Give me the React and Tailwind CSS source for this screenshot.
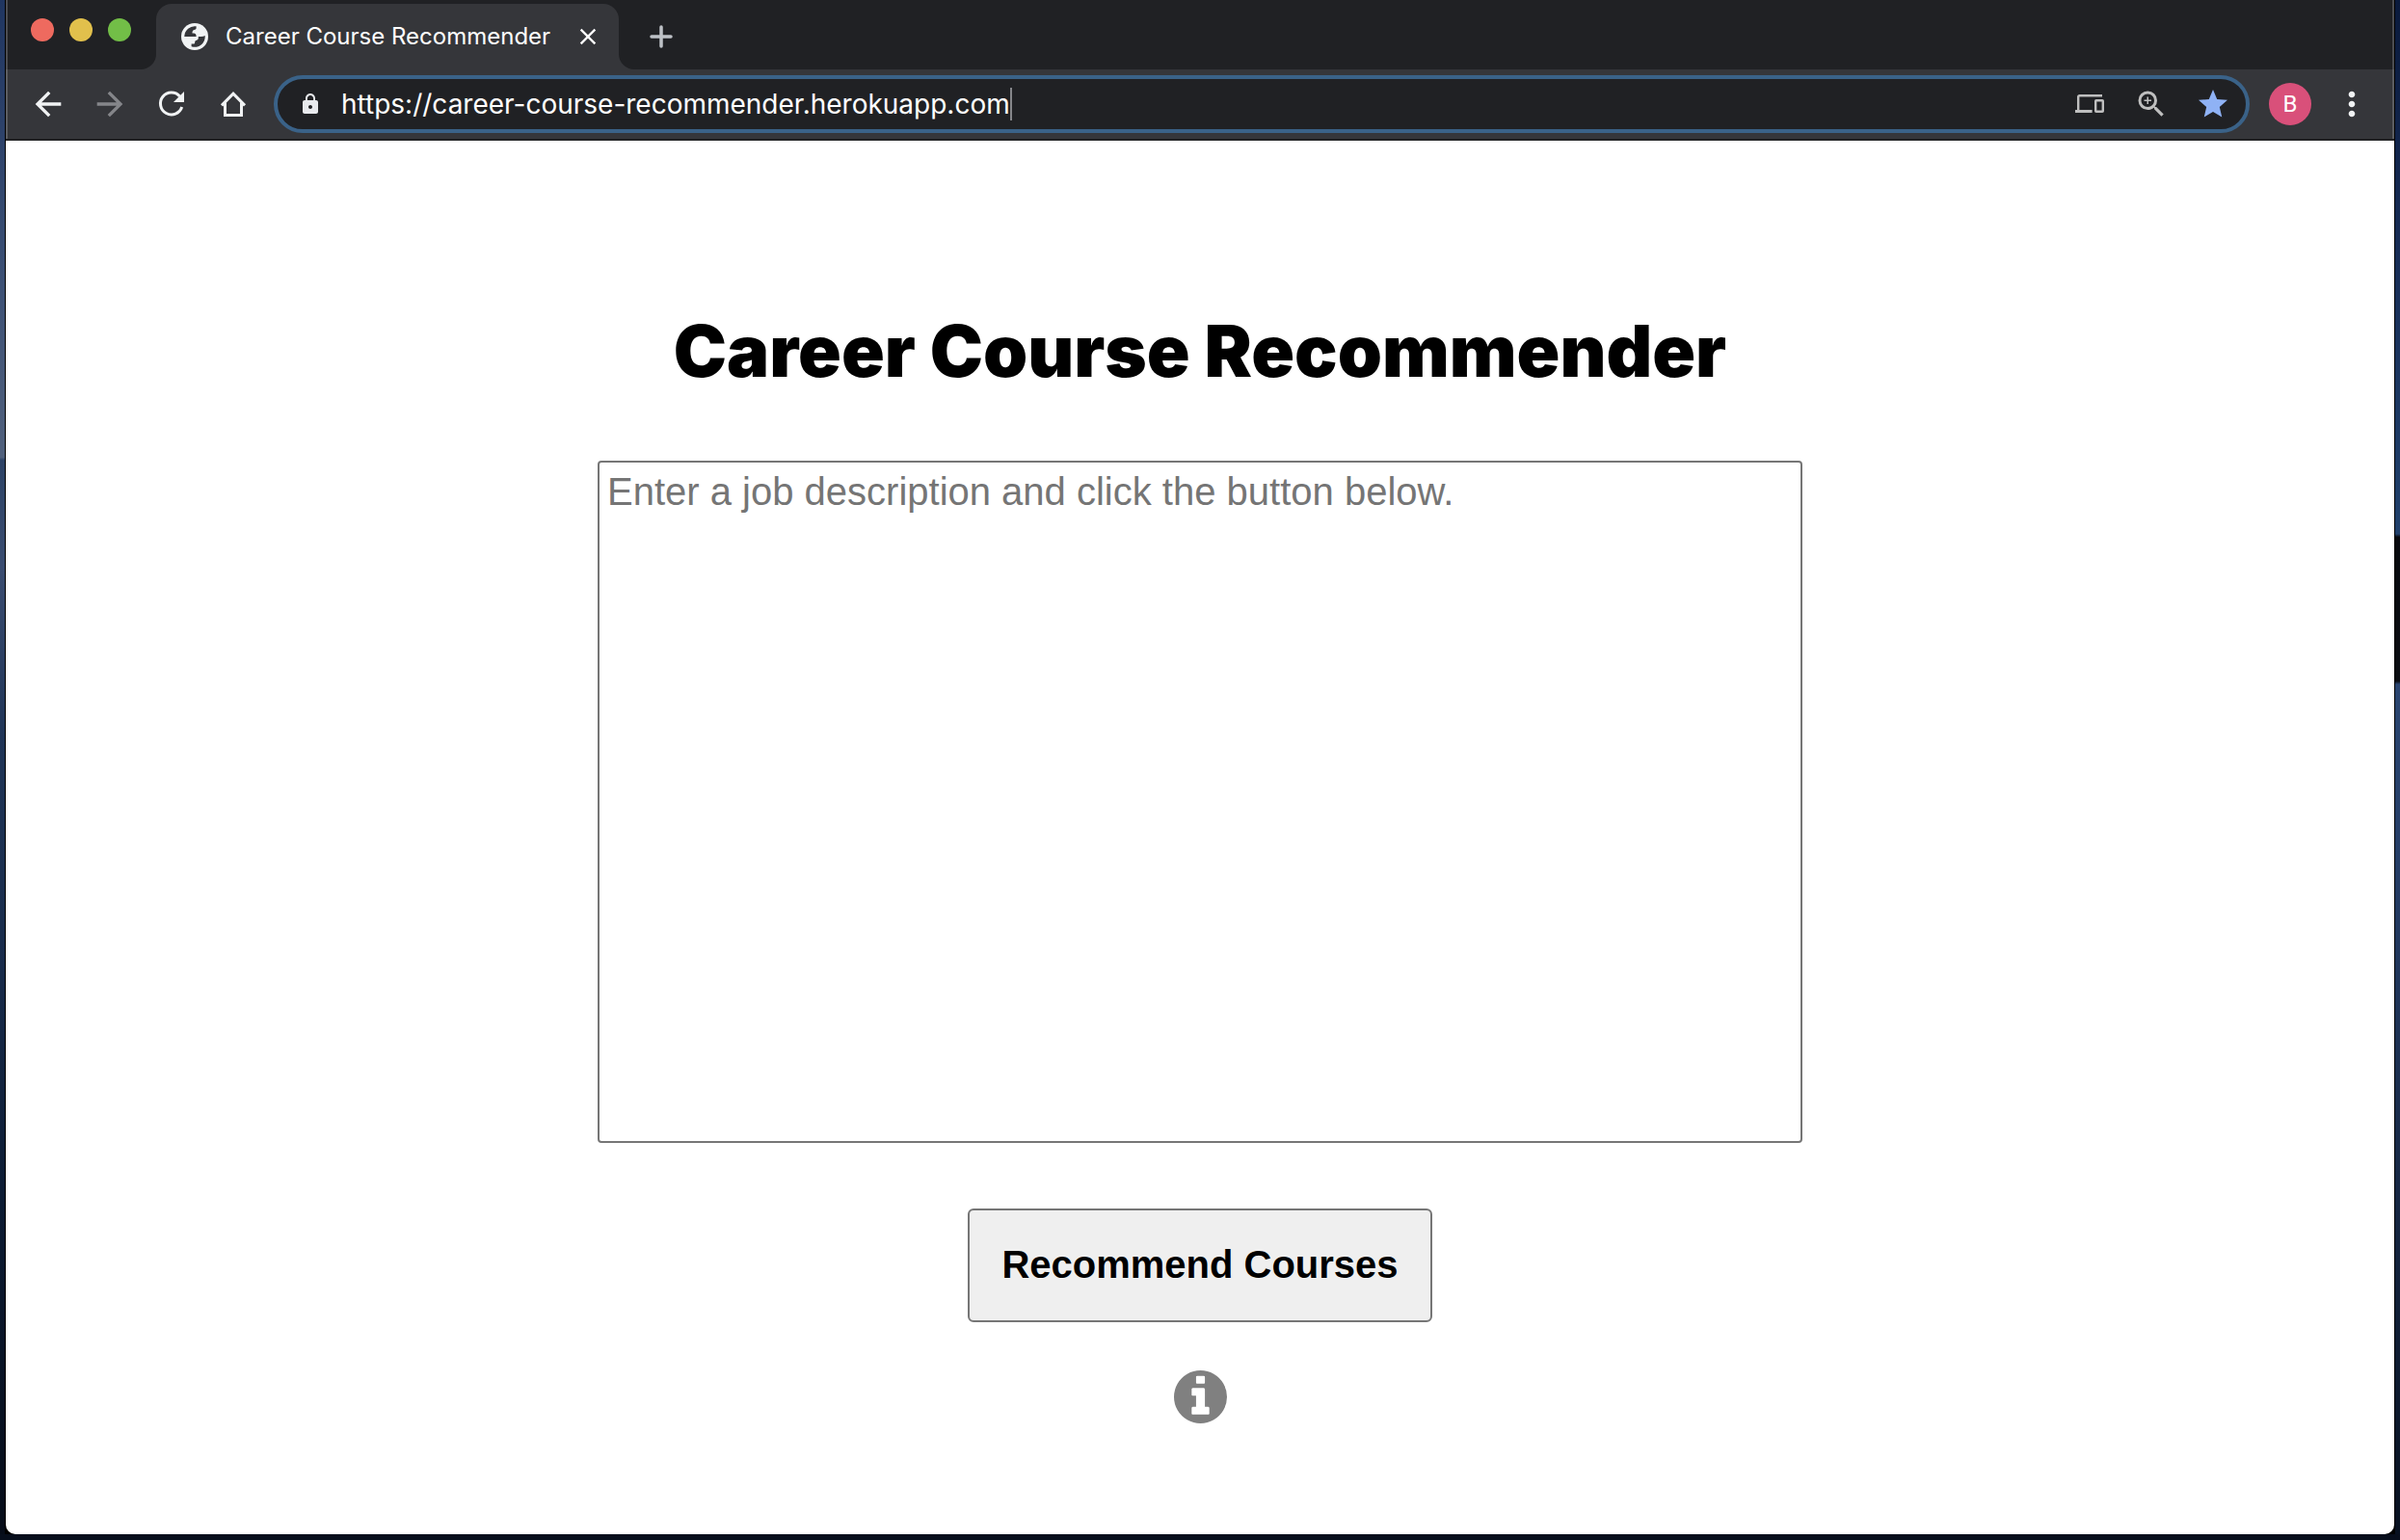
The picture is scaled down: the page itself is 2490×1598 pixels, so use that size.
import { MdArrowBack, MdArrowForward, MdLock, MdStar, MdZoomIn, MdClose, MdMoreVert } from "react-icons/md";

const iconButton = "flex size-16 items-center justify-center text-[#f1f3f4]";

function GlobeIcon() {
  return (
    <svg viewBox="0 0 28 28" className="size-7">
      <circle cx="14" cy="14" r="14" fill="#f1f3f4" />
      <path
        d="M3.3 13.6A10.8 10.8 0 0 1 15.6 3.3V5.6Q15.4 6.8 13.4 6.9Q11.6 7 11.5 9.4V10.6H13.4Q15.6 10.8 15.6 13.2V14H3.3zM24.7 13A10.8 10.8 0 0 1 10.6 24.3V21.4H13.4Q14.2 21.2 14.2 19.4Q14.4 18 16 17.8Q17.8 17.4 17.8 15.4V14H20.6Q23 14 24.7 13z"
        fill="#35363a"
      />
      <path d="M3 14H13.6Q14.6 14.2 14.6 16L10.6 21L3.4 17z" fill="#f1f3f4" />
    </svg>
  );
}

function ReloadIcon() {
  return (
    <svg viewBox="0 0 28 28" className="size-7" fill="none" stroke="currentColor" strokeWidth="3">
      <path d="M22.5 6A11.4 11.4 0 1 0 24.7 17" />
      <path d="M27 1V12H16z" fill="currentColor" stroke="none" />
    </svg>
  );
}

function HomeIcon() {
  return (
    <svg viewBox="0 0 28 28" className="size-7" fill="none" stroke="currentColor" strokeWidth="3">
      <path d="M2 15.4 14 3.2 26 15.4" />
      <path d="M5.5 12.5V25.5H22.5V12.5" />
    </svg>
  );
}

function DevicesIcon() {
  return (
    <svg viewBox="0 0 30 20" className="h-5 w-[30px]" fill="none" stroke="currentColor" strokeWidth="2.4">
      <path d="M28 1.2H4.6Q3.2 1.2 3.2 2.6V17" />
      <path d="M0 17.5H17.6" strokeWidth="3" />
      <rect x="21.2" y="6.2" width="7.6" height="11.6" rx="0.6" />
    </svg>
  );
}

function InfoIcon() {
  return (
    <svg viewBox="128 128 1536 1536" className="size-[55px]" fill="currentColor">
      <path d="M1152 1376v-160q0-14-9-23t-23-9h-96v-512q0-14-9-23t-23-9h-320q-14 0-23 9t-9 23v160q0 14 9 23t23 9h96v320h-96q-14 0-23 9t-9 23v160q0 14 9 23t23 9h448q14 0 23-9t9-23zm-128-896v-160q0-14-9-23t-23-9h-192q-14 0-23 9t-9 23v160q0 14 9 23t23 9h192q14 0 23-9t9-23zm640 416q0 209-103 385.5t-279.5 279.5-385.5 103-385.5-103-279.5-279.5-103-385.5 103-385.5 279.5-279.5 385.5-103 385.5 103 279.5 279.5 103 385.5z" />
    </svg>
  );
}

function TabFoot({ flip }) {
  return (
    <svg viewBox="0 0 16 16" className={flip ? "size-4 -scale-x-100 self-end" : "size-4 self-end"} fill="#35363a">
      <path d="M16 0v16H0A16 16 0 0 0 16 0z" />
    </svg>
  );
}

function TabStrip() {
  return (
    <div className="flex h-[72px] items-start border-x-2 border-[#4c4d50] bg-[#202124]">
      <div className="mt-[19px] ml-6 flex gap-4">
        <button aria-label="Close window" className="size-6 rounded-full bg-[#ee6a5f]" />
        <button aria-label="Minimize window" className="size-6 rounded-full bg-[#e1c04c]" />
        <button aria-label="Zoom window" className="size-6 rounded-full bg-[#72be47]" />
      </div>
      <div className="ml-[10px] flex h-full">
        <TabFoot />
        <div className="mt-1 flex w-[480px] items-center rounded-t-2xl bg-[#35363a] pl-[26px] text-white">
          <GlobeIcon />
          <span className="ml-[18px] flex-1 text-2xl whitespace-nowrap">Career Course Recommender</span>
          <button aria-label="Close tab" className="mr-[18px]">
            <MdClose className="size-7" />
          </button>
        </div>
        <TabFoot flip />
      </div>
      <button aria-label="New tab" className="mt-[22px] ml-3 text-[#bdc1c6]">
        <svg viewBox="0 0 32 32" className="size-8" stroke="currentColor" strokeWidth="3.5" strokeLinecap="round">
          <path d="M16 6v20M6 16h20" />
        </svg>
      </button>
    </div>
  );
}

function Toolbar() {
  return (
    <div className="border-b-2 border-[#222224] bg-[#35363a]">
      <div className="flex h-[72px] items-center border-x-2 border-[#5c5d60] pl-[10px]">
        <button aria-label="Back" className={iconButton}><MdArrowBack className="size-10" /></button>
        <button aria-label="Forward" className="flex size-16 items-center justify-center text-[#85868a]"><MdArrowForward className="size-10" /></button>
        <button aria-label="Reload" className={iconButton}><ReloadIcon /></button>
        <button aria-label="Home" className={iconButton}><HomeIcon /></button>
        <div className="ml-[10px] flex h-[60px] flex-1 items-center rounded-full border-4 border-[#3a6288] bg-[#202124] pr-[2px]">
          <MdLock className="ml-[22px] size-6 text-[#e8eaed]" />
          <div className="ml-5 flex flex-1 items-center">
            <input aria-label="Address" defaultValue="https://career-course-recommender.herokuapp.com" className="field-sizing-content text-[28px] leading-9 text-white outline-none" />
            <span className="h-[34px] w-[2px] bg-[#85868a]" />
          </div>
          <div className="flex text-[#bfbfbf]">
            <button aria-label="Send to your devices" className="flex size-16 items-center justify-center"><DevicesIcon /></button>
            <button aria-label="Zoom" className="flex size-16 items-center justify-center"><MdZoomIn className="size-9" /></button>
            <button aria-label="Bookmark" className="flex size-16 items-center justify-center text-[#8fb2f5]"><MdStar className="size-9" /></button>
          </div>
        </div>
        <button aria-label="Profile" className="ml-5 flex size-11 items-center justify-center rounded-full bg-[#d9507a] font-[Roboto] text-2xl text-white">B</button>
        <button aria-label="Menu" className="mx-[10px] flex size-16 items-center justify-center text-[#f1f3f4]"><MdMoreVert className="size-10" /></button>
      </div>
    </div>
  );
}

export default function App() {
  return (
    <div className="flex min-h-screen flex-col bg-[#070e1c] font-[Inter,sans-serif]">
      <div className="flex flex-1">
        <div className="w-[5px] bg-[linear-gradient(to_bottom,#1f3560_0%,#3d5175_19%,#50607c_29.8%,#2c4265_30%,#3a4c70_37%,#1f3456_48%,#182b4a_63%,#0c1b33_78%,#060c18_100%)]" />
        <div className="flex flex-1 flex-col bg-black px-px">
          <div className="flex flex-1 flex-col overflow-hidden rounded-b-[10px] bg-white">
            <TabStrip />
            <Toolbar />
            <main className="flex flex-1 flex-col items-center font-['Liberation_Sans',Arial,sans-serif] text-black">
              <h1 className="mt-[173px] font-[Inter,sans-serif] text-[74px] leading-[90px] font-black">Career Course Recommender</h1>
              <textarea aria-label="Job description" placeholder="Enter a job description and click the button below." className="mt-[69px] h-[708px] w-[1250px] max-w-full resize-none rounded-sm border-2 border-[#767676] px-2 py-[5px] text-[40px] leading-[50px] placeholder:text-[#757575] placeholder:opacity-100" />
              <button className="mt-[68px] rounded-md border-2 border-[#767676] bg-[#efefef] px-[33px] pt-[31px] pb-[33px] text-[40px] leading-[50px] font-bold">Recommend Courses</button>
              <button aria-label="Information" className="mt-[50px] text-[#808080]"><InfoIcon /></button>
            </main>
          </div>
        </div>
        <div className="w-[5px] bg-[linear-gradient(to_bottom,#0a1a3c_0%,#172c55_16%,#20406b_34.8%,#07090e_35%,#0b0d12_44.4%,#2a4570_44.6%,#253d66_56%,#07101f_100%)]" />
      </div>
      <div className="h-[6px]" />
    </div>
  );
}
